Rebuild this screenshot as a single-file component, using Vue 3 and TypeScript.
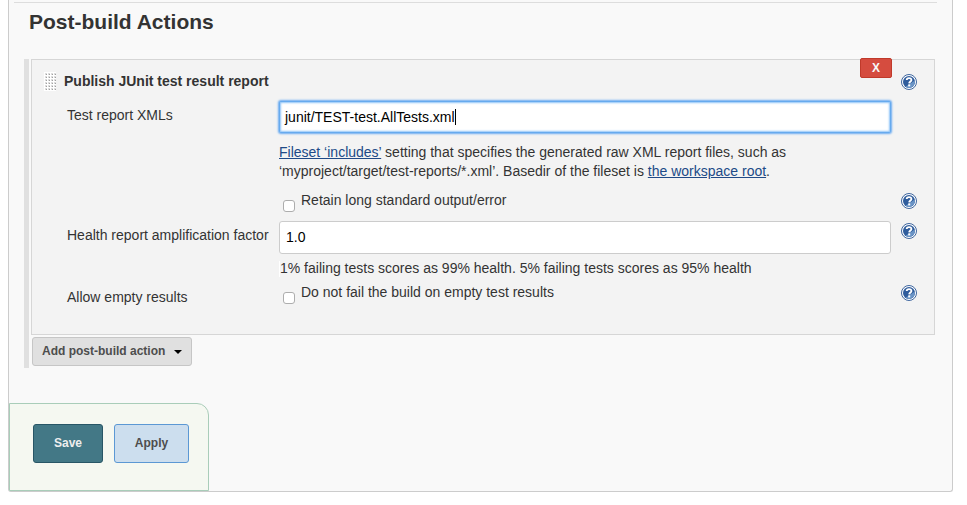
<script setup lang="ts">
import { defineComponent, h, ref } from 'vue'

const healthFactor = ref('1.0')
const retainLongOutput = ref(false)
const allowEmpty = ref(false)

const dots: { x: number; y: number }[] = []
for (let row = 0; row < 6; row++) {
  for (let col = 0; col < 4; col++) dots.push({ x: 1 + col * 3, y: 1 + row * 3 })
}

const HelpIcon = defineComponent({
  render: () =>
    h('svg', { width: 16, height: 16, viewBox: '0 0 16 16', role: 'img', 'aria-label': 'Help' }, [
      h('circle', { cx: 8, cy: 8, r: 7.5, fill: '#fff', stroke: '#3d659e', 'stroke-width': 1 }),
      h('circle', { cx: 8, cy: 8, r: 6, fill: '#2f5c9c' }),
      h('path', { d: 'M4.5 12.8A6 6 0 0 0 13.8 6.6Z', fill: '#6a94c6' }),
      h('path', {
        d: 'M5.7 6.1C5.7 3.5 10.4 3.5 10.4 5.9C10.4 7.5 8.3 7.5 8.2 9.4',
        fill: 'none',
        stroke: '#fff',
        'stroke-width': 1.9,
      }),
      h('rect', { x: 7.2, y: 10.4, width: 2, height: 2, fill: '#fff' }),
    ]),
})
</script>

<template>
  <main class="panel">
    <h2 class="section-title">Post-build Actions</h2>
    <div class="actions">
      <section class="card">
        <button class="remove" type="button">X</button>
        <header class="row head">
          <svg class="grip" width="12" height="19" viewBox="0 0 12 19">
            <rect width="12" height="19" fill="#fff" />
            <template v-for="d in dots" :key="`${d.x}-${d.y}`">
              <rect :x="d.x" :y="d.y" width="2" height="2" fill="#dcdcdc" />
              <rect :x="d.x + 1" :y="d.y + 1" width="1" height="1" fill="#a0a0a0" />
            </template>
          </svg>
          <h3 class="card-title">Publish JUnit test result report</h3>
          <HelpIcon class="help" />
        </header>
        <div class="row xml">
          <span class="label">Test report XMLs</span>
          <div class="field focused">junit/TEST-test.AllTests.xml<i class="caret"></i></div>
        </div>
        <div class="row hint">
          <p class="description">
            <a>Fileset ‘includes’</a> setting that specifies the generated raw XML report files, such as<br />
            ‘myproject/target/test-reports/*.xml’. Basedir of the fileset is <a>the workspace root</a>.
          </p>
        </div>
        <div class="row retain">
          <label class="check"><input v-model="retainLongOutput" type="checkbox" /><span>Retain long standard output/error</span></label>
          <HelpIcon class="help" />
        </div>
        <div class="row factor">
          <span class="label">Health report amplification factor</span>
          <input v-model="healthFactor" class="field" type="text" />
          <HelpIcon class="help" />
        </div>
        <div class="row score">
          <p class="note">1% failing tests scores as 99% health. 5% failing tests scores as 95% health</p>
        </div>
        <div class="row empty">
          <span class="label">Allow empty results</span>
          <label class="check"><input v-model="allowEmpty" type="checkbox" /><span>Do not fail the build on empty test results</span></label>
          <HelpIcon class="help" />
        </div>
      </section>
      <button class="add" type="button">
        Add post-build action
        <svg width="8" height="4" viewBox="0 0 8 4"><path d="M0 0H8L4 4Z" fill="#000" /></svg>
      </button>
    </div>
    <footer class="save-bar">
      <button class="save" type="button">Save</button>
      <button class="apply" type="button">Apply</button>
    </footer>
  </main>
</template>

<style>
body {
  background: #fff;
}
</style>

<style scoped>
* {
  box-sizing: border-box;
}
.panel {
  display: flex;
  flex-direction: column;
  width: 945px;
  height: 492px;
  margin-left: 8px;
  border: 1px solid #ccc;
  border-top: 0;
  border-radius: 0 0 3px 3px;
  background: #f9f9f9;
  color: #333;
  font: 14px/19px "Liberation Sans", Arial, sans-serif;
}
.section-title {
  width: 923px;
  height: 57px;
  margin: 2px 0 0 5px;
  padding: 7px 0 0 15px;
  border-top: 1px solid #ddd;
  font-size: 21px;
  line-height: 24px;
}
.actions {
  width: 911px;
  height: 309px;
  margin-left: 15px;
  border-left: 5px solid #e0e0e0;
  padding-left: 2px;
}
.card {
  position: relative;
  width: 904px;
  height: 276px;
  border: 1px solid #d6d6d6;
  background: #f3f3f3;
}
.remove {
  position: absolute;
  top: -2px;
  left: 828px;
  width: 32px;
  height: 20px;
  padding: 0;
  border: 1px solid #c03a2b;
  border-radius: 2px;
  background: #d54c3f;
  color: #f7f7f7;
  font: bold 12px/18px "Liberation Sans", Arial, sans-serif;
}
.row {
  display: grid;
  grid-template-columns: 212px 612px 16px;
  align-items: start;
  padding-left: 35px;
}
.help {
  display: block;
  grid-column: 3;
  grid-row: 1;
  margin-left: 10px;
}
.head {
  grid-template-columns: 20px 827px 16px;
  height: 41px;
  padding: 12px 0 0 12px;
}
.head .help {
  margin: 2px 0 0 10px;
}
.grip {
  display: block;
}
.card-title {
  margin: 0;
  font-size: 14px;
  line-height: 19px;
}
.label {
  grid-column: 1;
  white-space: nowrap;
}
.field {
  grid-column: 2;
  width: 612px;
  height: 33px;
  padding: 0 6px 2px;
  border: 1px solid #ccc;
  border-radius: 3px;
  outline: 0;
  background: #fff;
  color: #000;
  font: 14px/29px "Liberation Sans", Arial, sans-serif;
}
.focused {
  height: 32px;
  padding: 0 5px;
  border-color: #66aaee;
  border-radius: 2px;
  box-shadow: 0 0 2px 1px #6cacf2, inset 0 0 2px 1px #8fc4f8;
  line-height: 30px;
}
.caret {
  display: inline-block;
  width: 1px;
  height: 16px;
  background: #000;
  vertical-align: -3px;
}
.xml {
  height: 42px;
}
.xml .label {
  margin-top: 5px;
}
.hint {
  height: 50px;
}
.description,
.note {
  grid-column: 2;
  margin: 0;
  white-space: nowrap;
}
a {
  color: #204a87;
  text-decoration: underline;
}
.retain {
  height: 28px;
}
.check {
  display: flex;
  grid-column: 2;
  align-items: start;
  white-space: nowrap;
}
.check span {
  margin: -2px 0 0 6px;
}
.check input {
  appearance: none;
  width: 12px;
  height: 12px;
  margin: 7px 0 0 4px;
  border: 1px solid #adadad;
  border-radius: 3px;
  background: #fff;
}
.factor {
  height: 40px;
}
.factor .label {
  margin-top: 5px;
}
.factor .help {
  margin-top: 2px;
}
.score {
  height: 24px;
}
.note {
  height: 16px;
  border-left: 1px solid #fff;
  line-height: 15px;
}
.empty .label {
  margin-top: 3px;
}
.add {
  display: flex;
  align-items: center;
  justify-content: space-between;
  width: 160px;
  height: 29px;
  margin: 2px 0 0 1px;
  padding: 0 9px;
  border: 1px solid #c6c6c6;
  border-radius: 3px;
  background: #e0e0e0;
  color: #4d4d4d;
  font: bold 12px/27px "Liberation Sans", Arial, sans-serif;
}
.save-bar {
  display: flex;
  gap: 11px;
  width: 200px;
  height: 88px;
  margin-top: 35px;
  padding: 20px 0 0 23px;
  border: 1px solid #a9cdb9;
  border-radius: 0 12px 0 0;
  background: #f5f8f1;
}
.save,
.apply {
  height: 39px;
  padding: 0;
  border-radius: 3px;
  font: bold 12px/37px "Liberation Sans", Arial, sans-serif;
}
.save {
  width: 70px;
  border: 1px solid #285666;
  background: #437886;
  color: #eee;
}
.apply {
  width: 75px;
  border: 1px solid #5b98d4;
  background: #ccdeee;
  color: #4d4d4d;
}
</style>
